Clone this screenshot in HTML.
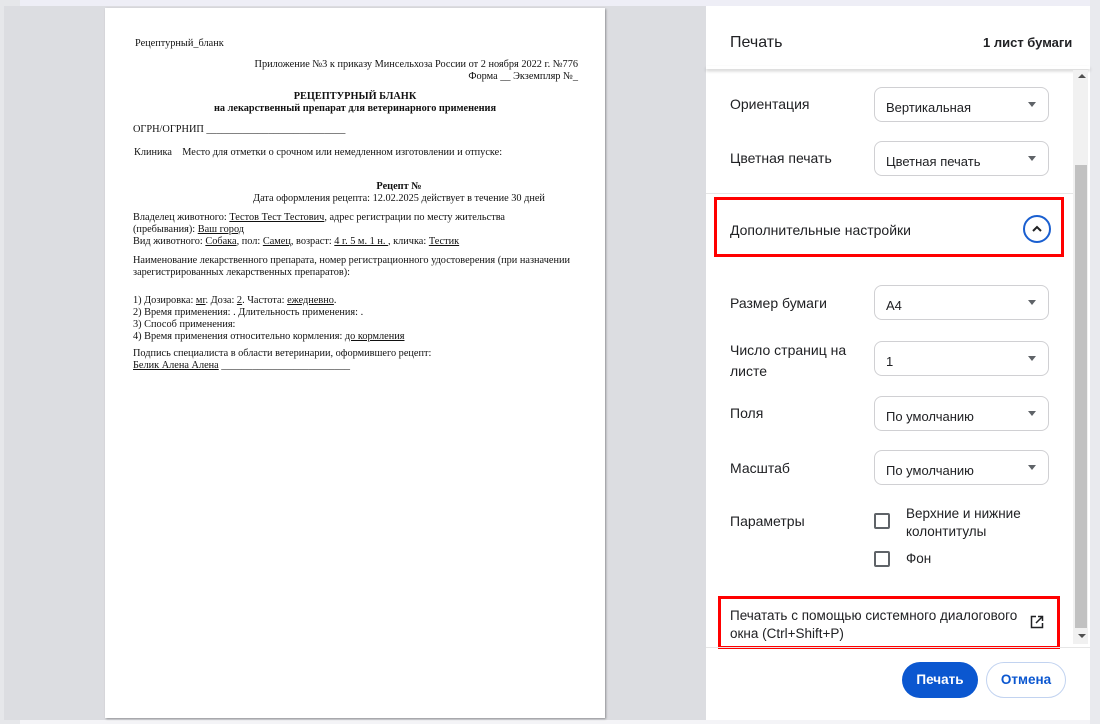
<!DOCTYPE html>
<html><head><meta charset="utf-8"><style>
*{margin:0;padding:0;box-sizing:border-box}
body{width:1100px;height:724px;overflow:hidden;background:#f4f4f7;position:relative;font-family:"Liberation Sans",sans-serif}
.abs{position:absolute}
#leftbg{left:0;top:0;width:20px;height:724px;background:#e6e7ea}
#topbg{left:0;top:0;width:1100px;height:6px;background:#eeeef6}
#preview{left:4px;top:6px;width:702px;height:714px;background:#dcdde1}
#page{left:105px;top:8px;width:500px;height:710px;background:#fff;box-shadow:1px 1px 2px rgba(0,0,0,.35);font-family:"Liberation Serif",serif;font-size:10.3px;color:#111;line-height:12px}
#page .t{position:absolute;white-space:nowrap}
u{text-decoration:underline}
#panel{left:706px;top:6px;width:384px;height:714px;background:#fff}
#rightbg{left:1090px;top:0;width:10px;height:724px;background:#e9eaee}
.lbl{position:absolute;font-size:14px;color:#202124;white-space:nowrap}
.sel{position:absolute;left:874px;width:175px;height:35px;border:1px solid #d0d0d3;border-radius:8px;font-size:13px;color:#202124;padding:12px 0 0 11px}
.sel:after{content:"";position:absolute;right:12px;top:14px;border-left:4px solid transparent;border-right:4px solid transparent;border-top:5px solid #5f6368}
.cb{position:absolute;left:874px;width:16px;height:16px;border:2px solid #5f6368;border-radius:2px}
.red{position:absolute;border:3px solid #f00}
</style></head><body>
<div class="abs" id="topbg"></div>
<div class="abs" id="leftbg"></div>
<div class="abs" id="preview"></div>
<div class="abs" id="rightbg"></div>
<div class="abs" id="page">
<div class="t" style="left:30px;top:30px">Рецептурный_бланк</div>
<div class="t" style="right:27px;top:51px;text-align:right">Приложение №3 к приказу Минсельхоза России от 2 ноября 2022 г. №776<br>Форма __ Экземпляр №_</div>
<div class="t" style="left:0;width:500px;text-align:center;top:83px;font-weight:bold">РЕЦЕПТУРНЫЙ БЛАНК<br>на лекарственный препарат для ветеринарного применения</div>
<div class="t" style="left:28px;top:116px">ОГРН/ОГРНИП ___________________________</div>
<div class="t" style="left:29px;top:139px">Клиника &nbsp;&nbsp;&nbsp;Место для отметки о срочном или немедленном изготовлении и отпуске:</div>
<div class="t" style="left:0;width:588px;text-align:center;top:173px"><b>Рецепт №</b><br>Дата оформления рецепта: 12.02.2025 действует в течение 30 дней</div>
<div class="t" style="left:28px;top:204px">Владелец животного: <u>Тестов Тест Тестович</u>, адрес регистрации по месту жительства<br>(пребывания): <u>Ваш город</u><br>Вид животного: <u>Собака</u>, пол: <u>Самец</u>, возраст: <u>4 г. 5 м. 1 н. </u>, кличка: <u>Тестик</u></div>
<div class="t" style="left:28px;top:247px">Наименование лекарственного препарата, номер регистрационного удостоверения (при назначении<br>зарегистрированных лекарственных препаратов):</div>
<div class="t" style="left:28px;top:287px">1) Дозировка: <u>мг</u>. Доза: <u>2</u>. Частота: <u>ежедневно</u>.<br>2) Время применения: . Длительность применения: .<br>3) Способ применения:<br>4) Время применения относительно кормления: <u>до кормления</u></div>
<div class="t" style="left:28px;top:340px">Подпись специалиста в области ветеринарии, оформившего рецепт:<br><u>Белик Алена Алена</u> _________________________</div>
</div>
<div class="abs" id="panel"></div>
<div class="abs" style="left:706px;top:66px;width:384px;height:3px;box-shadow:0 2px 3px rgba(0,0,0,.2);background:#fff"></div>
<div class="lbl" style="left:730px;top:34px;font-size:16px">Печать</div>
<div class="lbl" style="left:983px;top:35px;font-weight:bold;font-size:13px">1 лист бумаги</div>
<div class="abs" style="left:1073px;top:70px;width:15px;height:574px;background:#f1f1f1"></div>
<div class="abs" style="left:1075px;top:165px;width:12px;height:463px;background:#c1c1c1"></div>
<div class="abs" style="left:1078px;top:74px;border-left:4px solid transparent;border-right:4px solid transparent;border-bottom:4px solid #505050"></div>
<div class="abs" style="left:1078px;top:634px;border-left:4px solid transparent;border-right:4px solid transparent;border-top:4px solid #505050"></div>
<div class="lbl" style="left:730px;top:96px">Ориентация</div>
<div class="sel" style="top:87px">Вертикальная</div>
<div class="lbl" style="left:730px;top:150px">Цветная печать</div>
<div class="sel" style="top:141px">Цветная печать</div>
<div class="abs" style="left:706px;top:193px;width:367px;height:1px;background:#e6e6e6"></div>
<div class="red" style="left:714px;top:197px;width:350px;height:60px"></div>
<div class="lbl" style="left:730px;top:222px">Дополнительные настройки</div>
<div class="abs" style="left:1023px;top:215px;width:28px;height:28px;border:2px solid #1a5fd0;border-radius:50%"></div>
<svg class="abs" style="left:1031px;top:224px" width="12" height="9"><path d="M2 7L6 3L10 7" stroke="#202124" stroke-width="2" fill="none"/></svg>
<div class="lbl" style="left:730px;top:295px">Размер бумаги</div>
<div class="sel" style="top:285px">A4</div>
<div class="lbl" style="left:730px;top:340px;line-height:21px">Число страниц на<br>листе</div>
<div class="sel" style="top:341px">1</div>
<div class="lbl" style="left:730px;top:405px">Поля</div>
<div class="sel" style="top:396px">По умолчанию</div>
<div class="lbl" style="left:730px;top:460px">Масштаб</div>
<div class="sel" style="top:450px">По умолчанию</div>
<div class="lbl" style="left:730px;top:513px">Параметры</div>
<div class="cb" style="top:513px"></div>
<div class="lbl" style="left:906px;top:505px;font-size:13.5px;line-height:18px">Верхние и нижние<br>колонтитулы</div>
<div class="cb" style="top:551px"></div>
<div class="lbl" style="left:906px;top:551px;font-size:13.5px">Фон</div>
<div class="red" style="left:718px;top:596px;width:342px;height:53px"></div>
<div class="lbl" style="left:730px;top:607px;font-size:13.5px;line-height:18px">Печатать с помощью системного диалогового<br>окна (Ctrl+Shift+P)</div>
<svg class="abs" style="left:1030px;top:615px" width="14" height="14"><path d="M6 1.5H1.5V12.5H12.5V8M8 1.5H12.5V6M12.5 1.5L6 8" stroke="#202124" stroke-width="1.5" fill="none"/></svg>
<div class="abs" style="left:706px;top:647px;width:384px;height:1px;background:#e6e6e6"></div>
<div class="abs" style="left:902px;top:662px;width:76px;height:36px;border-radius:18px;background:#0b57d0;color:#fff;font-size:13.5px;font-weight:bold;text-align:center;line-height:36px">Печать</div>
<div class="abs" style="left:986px;top:662px;width:80px;height:36px;border-radius:18px;border:1px solid #c2d3f0;color:#0b57d0;font-size:13.5px;font-weight:bold;text-align:center;line-height:34px">Отмена</div>
</body></html>
